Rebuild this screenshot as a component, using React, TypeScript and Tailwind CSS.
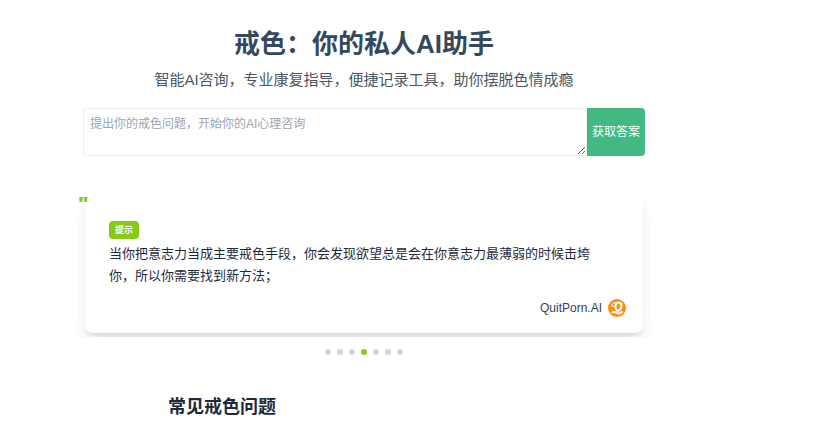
import clsx from 'clsx';

const slides = [0, 1, 2, 3, 4, 5, 6];
const activeSlide = 3;

function BrandLogo() {
  return (
    <svg viewBox="0 0 36 36" className="size-[18px]" aria-hidden="true">
      <circle cx="18" cy="18" r="18" fill="#ff8c0a" />
      <g fill="none" stroke="#fff" strokeLinecap="round" strokeLinejoin="round">
        <path
          d="M16 20c-3-4-1-13 5-13 7 0 7 8 4 13-2 3-5 4-7 3"
          strokeWidth="4.4"
        />
        <path d="M17 7c-6-1-10 3-9 7 1 3 4 2 4 0" strokeWidth="2" />
        <path
          d="M9 27c4-4 8 2 12 2 3 0 5-1 7-3"
          strokeWidth="4"
        />
      </g>
    </svg>
  );
}

export default function App() {
  return (
    <div className="min-h-screen bg-white pr-[100px] font-['Liberation_Sans','Noto_Sans_CJK_SC',sans-serif] text-gray-800">
      <main className="mx-auto max-w-[572px]">
        {/* Hero */}
        <section className="px-[5px] pt-6 text-center">
          <h1 className="text-[26px] leading-10 font-bold text-[#34495e]">
            戒色：你的私人AI助手
          </h1>
          <p className="mt-1 -mx-2 text-[15px] leading-6 text-[#4b5563]">
            智能AI咨询，专业康复指导，便捷记录工具，助你摆脱色情成瘾
          </p>
          <form
            className="mt-4 flex h-12"
            onSubmit={(e) => e.preventDefault()}
          >
            <textarea
              aria-label="提出你的戒色问题"
              placeholder="提出你的戒色问题，开始你的AI心理咨询"
              className="min-w-0 flex-1 rounded border border-[#ebedf0] px-[6px] py-[5px] text-[12px] leading-5 placeholder:text-[#9ca3af] focus:outline-none"
            />
            <button
              type="submit"
              className="rounded-r bg-[#42b983] px-[5px] text-[12px] whitespace-nowrap text-white"
            >
              获取答案
            </button>
          </form>
        </section>

        {/* Tips carousel */}
        <section className="relative mt-9">
          <span className="absolute -top-1 left-0 font-['Noto_Sans'] text-[20px] leading-8 font-black text-[#84cc16]">
            &quot;
          </span>
          <div className="overflow-hidden px-[7px] pb-1">
            <article className="rounded-lg pt-7 pr-[17px] pb-4 pl-6 shadow-lg shadow-black/12">
              <span className="mt-px block w-fit rounded bg-[#84cc16] px-[6px] text-[9px] leading-[18px] font-bold text-white">
                提示
              </span>
              <p className="mt-1 pr-4 text-[13px] leading-[22px]">
                当你把意志力当成主要戒色手段，你会发现欲望总是会在你意志力最薄弱的时候击垮你，所以你需要找到新方法；
              </p>
              <div className="mt-3 flex items-center justify-end gap-[6px] text-[12px] leading-[18px] text-gray-700">
                QuitPorn.AI
                <BrandLogo />
              </div>
            </article>
          </div>
          <div className="mt-3 flex justify-center gap-[6px]">
            {slides.map((slide) => (
              <button
                key={slide}
                type="button"
                aria-label={`${slide + 1}`}
                className={clsx(
                  'size-[6px] rounded-full',
                  slide === activeSlide ? 'bg-[#84cc16]' : 'bg-gray-300',
                )}
              />
            ))}
          </div>
        </section>

        {/* FAQ */}
        <section className="mt-10 px-[90px]">
          <h2 className="text-[18px] leading-6 font-bold">常见戒色问题</h2>
        </section>
      </main>
    </div>
  );
}
